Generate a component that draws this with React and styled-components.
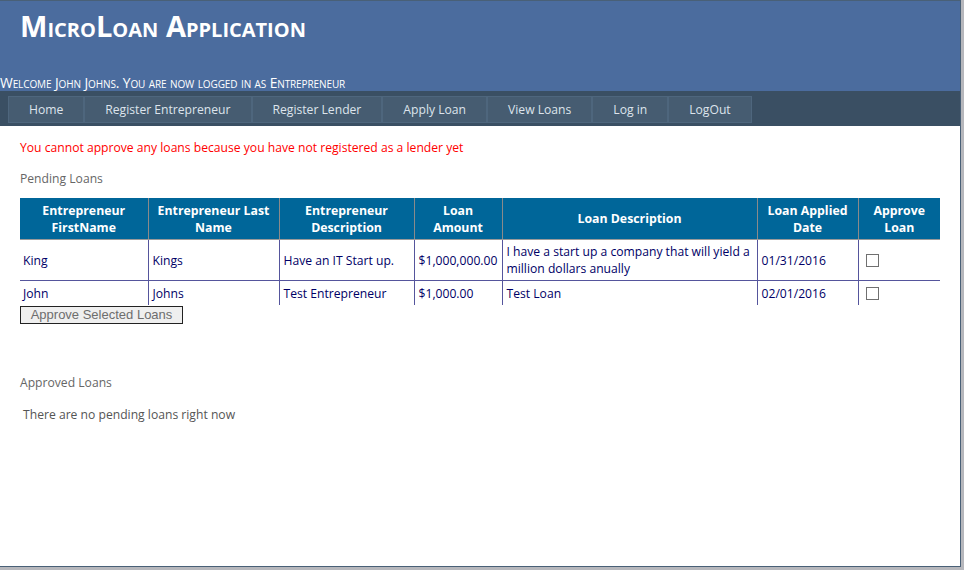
import React from "react";
import styled, { createGlobalStyle } from "styled-components";

const GlobalStyle = createGlobalStyle`
  html, body { margin: 0; padding: 0; }
  body {
    background: #b6b7bc;
    font-family: "Open Sans", "Noto Sans", sans-serif;
    font-size: 12.15px;
    color: #696969;
  }
`;

const Page = styled.div`
  width: 960px;
  min-height: 565px;
  background: #fff;
  border: 1px solid #496077;
  border-left: none;
  display: flex;
  flex-direction: column;
`;

const Header = styled.header`
  background: #4b6c9e;
  height: 90px;
  display: flex;
  flex-direction: column;
  justify-content: space-between;
`;

const Title = styled.h1`
  margin: 0;
  padding: 6px 20px 0;
  font-size: 29.1px;
  line-height: 38px;
  font-weight: 700;
  font-variant: small-caps;
  color: #fff;
`;

const Welcome = styled.div`
  font-variant: small-caps;
  font-size: 13.8px;
  line-height: 17px;
  color: #fff;
  letter-spacing: -0.1px;
`;

const Nav = styled.nav`
  background: #3a4f63;
  padding: 5px 0 3px 8px;
  display: flex;
`;

const NavItem = styled.a`
  display: block;
  background: #465c71;
  border: 1px solid #4e667d;
  color: #dde4ec;
  padding: 4px 20px;
  line-height: 17px;
  font-size: 12.15px;
  text-decoration: none;
  white-space: nowrap;
`;

const Main = styled.main`
  padding: 0 20px;
`;

const ErrorText = styled.div`
  color: #ff0000;
  line-height: 17px;
  margin-top: 13px;
`;

const SectionTitle = styled.div`
  line-height: 17px;
  color: #666;
  margin-top: ${(p) => p.$top}px;
`;

const Table = styled.table`
  width: 920px;
  border-collapse: collapse;
  table-layout: fixed;
  margin-top: 11px;
`;

const Th = styled.th`
  background: #006699;
  color: #fff;
  font-weight: 700;
  font-size: 12.3px;
  line-height: 17px;
  height: 41px;
  padding: 0 4px;
  text-align: center;
  border-left: 1px solid #8a8a8a;
  border-bottom: 1px solid #9a9a9a;
  &:first-child { border-left: none; }
`;

const Td = styled.td`
  color: #000066;
  line-height: 17px;
  padding: ${(p) => (p.$last ? "2px" : "0")} 3px 0 4px;
  vertical-align: middle;
  height: ${(p) => p.$h}px;
  box-sizing: border-box;
  border-left: 1px solid #55559c;
  border-bottom: ${(p) => (p.$last ? "none" : "1px solid #55559c")};
  &:first-child { border-left: none; padding-left: 3px; }
`;

const CheckCell = styled(Td)`
  padding-left: 7px;
`;

const Check = styled.input.attrs({ type: "checkbox" })`
  appearance: none;
  width: 13px;
  height: 13px;
  margin: 0;
  border: 1px solid #707070;
  background: #fff;
  display: block;
`;

const Button = styled.button`
  display: block;
  margin-top: 1px;
  font-family: "Liberation Sans", Arial, sans-serif;
  font-size: 13px;
  line-height: 15px;
  color: #6d6d6d;
  background: #efefef;
  border: 1px solid #222;
  padding: 0 7px;
  height: 18px;
  width: 163px;
  text-align: center;
`;

const Empty = styled.div`
  line-height: 17px;
  color: #555;
  margin-top: 15px;
  padding-left: 3px;
`;

const menu = ["Home", "Register Entrepreneur", "Register Lender", "Apply Loan", "View Loans", "Log in", "LogOut"];
const cols = [128, 131, 135, 88, 255, 101, 82];
const headers = [
  "Entrepreneur FirstName",
  "Entrepreneur Last Name",
  "Entrepreneur Description",
  "Loan Amount",
  "Loan Description",
  "Loan Applied Date",
  "Approve Loan",
];
const rows = [
  ["King", "Kings", "Have an IT Start up.", "$1,000,000.00", "I have a start up a company that will yield a million dollars anually", "01/31/2016"],
  ["John", "Johns", "Test Entrepreneur", "$1,000.00", "Test Loan", "02/01/2016"],
];

export default function App() {
  return (
    <>
      <GlobalStyle />
      <Page>
        <Header>
          <Title>MicroLoan Application</Title>
          <Welcome>Welcome John Johns. You are now logged in as Entrepreneur</Welcome>
        </Header>
        <Nav>
          {menu.map((m) => (
            <NavItem key={m} href="#">{m}</NavItem>
          ))}
        </Nav>
        <Main>
          <ErrorText>You cannot approve any loans because you have not registered as a lender yet</ErrorText>
          <SectionTitle $top={14}>Pending Loans</SectionTitle>
          <Table>
            <colgroup>
              {cols.map((w, i) => (
                <col key={i} style={{ width: w }} />
              ))}
            </colgroup>
            <thead>
              <tr>
                {headers.map((h) => (
                  <Th key={h}>{h}</Th>
                ))}
              </tr>
            </thead>
            <tbody>
              {rows.map((r, ri) => {
                const last = ri === rows.length - 1;
                const h = last ? 24 : 41;
                return (
                  <tr key={ri}>
                    {r.map((c, ci) => (
                      <Td key={ci} $h={h} $last={last}>{c}</Td>
                    ))}
                    <CheckCell $h={h} $last={last}>
                      <Check />
                    </CheckCell>
                  </tr>
                );
              })}
            </tbody>
          </Table>
          <Button disabled>Approve Selected Loans</Button>
          <SectionTitle $top={50}>Approved Loans</SectionTitle>
          <Empty>There are no pending loans right now</Empty>
        </Main>
      </Page>
    </>
  );
}
